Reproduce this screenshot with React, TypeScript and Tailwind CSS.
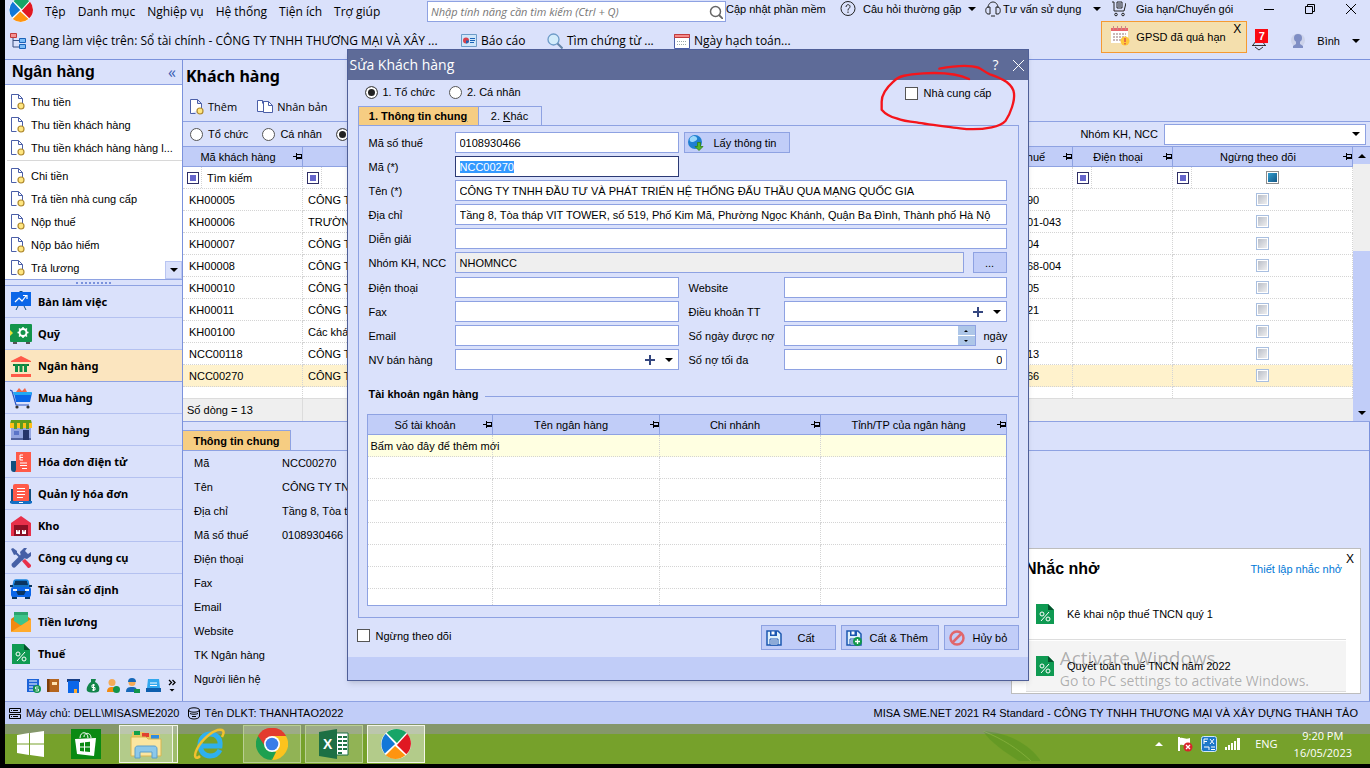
import React, { useEffect, useRef } from 'react';
import clsx from 'clsx';

/* ---------- small shared icons ---------- */

const Caret = ({ up = false, className = '' }: { up?: boolean; className?: string }) => (
  <svg viewBox="0 0 8 4" className={clsx('w-2 h-1 shrink-0', className)}>
    <path d={up ? 'M0 4h8L4 0z' : 'M0 0h8L4 4z'} fill="#000" />
  </svg>
);

const Pin = () => (
  <svg viewBox="0 0 9 7" className="w-[9px] h-[7px] shrink-0" shapeRendering="crispEdges">
    <path d="M0 3h3v1H0zM3 0h1v7H3zM4 1h5v1H4zM4 4h5v2H4zM8 1h1v4H8z" fill="#000" />
  </svg>
);

const NewDoc = () => (
  <svg viewBox="0 0 14 16" className="w-[14px] h-4 shrink-0">
    <path d="M.5 14.500V.5h7l4 4v5M7.500.5v4h4M.5 14.500h5" fill="#fff" stroke="#4b5fa8" />
    <circle cx="10" cy="12" r="3" fill="#ffe680" stroke="#b08a2e" strokeWidth="1.200" />
  </svg>
);

const CopyDoc = () => (
  <svg viewBox="0 0 16 16" className="w-4 h-4 shrink-0">
    <path d="M.5 1.500h5l3 3v8h-8z" fill="#fff" stroke="#4b5fa8" />
    <path d="M6.500 4.500h5l4 4v7h-9z" fill="#fff" stroke="#4b5fa8" transform="translate(0 -2)" />
    <path d="M11.500 2.500v4h4M5.500 1.500v3" fill="none" stroke="#4b5fa8" />
  </svg>
);

const Logo = ({ className }: { className: string }) => (
  <svg viewBox="0 0 32 32" className={className}>
    <circle cx="16" cy="16" r="16" fill="#fff" />
    <path d="M6 4A16 16 0 0 1 27 4L17 15z" fill="#17a567" />
    <path d="M28 5A16 16 0 0 1 27 27L17 17z" fill="#e01822" />
    <path d="M26 28A16 16 0 0 1 5 28L15 18z" fill="#ff9410" />
    <path d="M4 26A16 16 0 0 1 5 5L15 16z" fill="#1378d8" />
  </svg>
);

const TaxIcon = ({ className }: { className: string }) => (
  <svg viewBox="0 0 18 20" className={className}>
    <path d="M0 0h12l6 6v14H0z" fill="#0f9a52" />
    <path d="M12 0l6 6h-6z" fill="#04532c" />
    <circle cx="6" cy="10" r="2" fill="none" stroke="#fff" />
    <circle cx="12" cy="15" r="2" fill="none" stroke="#fff" />
    <path d="M5 17l8-9" stroke="#fff" />
  </svg>
);

const Floppy = ({ plus = false }: { plus?: boolean }) => (
  <svg viewBox="0 0 16 16" className="w-4 h-4 shrink-0">
    <path d="M1 1h11l3 3v11H1z" fill="#dff0fb" stroke="#1b57b0" strokeWidth="1.500" />
    <path d="M4 1h7v5H4z" fill="#1b57b0" />
    <path d="M5.500 1.500h3v3h-3z" fill="#fff" />
    <path d="M4 9h8v6H4z" fill="#fff" stroke="#1b57b0" />
    <path d="M5 11h6M5 13h6" stroke="#1b57b0" />
    {plus && (
      <>
        <circle cx="11.500" cy="11.500" r="4.500" fill="#12984a" />
        <path d="M9 11.500h5M11.500 9v5" stroke="#fff" strokeWidth="1.300" />
      </>
    )}
  </svg>
);

/* ---------- sidebar data ---------- */

const tasksIn = ['Thu tiền', 'Thu tiền khách hàng', 'Thu tiền khách hàng hàng l...'];
const tasksOut = ['Chi tiền', 'Trả tiền nhà cung cấp', 'Nộp thuế', 'Nộp bảo hiểm', 'Trả lương'];

const modules: { label: string; icon: React.ReactNode }[] = [
  {
    label: 'Bàn làm việc',
    icon: (
      <>
        <path d="M10 0h2v2h-2zM8 15l-2 4M14 15l2 4" fill="#12507e" stroke="#12507e" />
        <path d="M1 1h20v14H1z" fill="#0a66e8" />
        <path d="M5 11l4-4 3 3 4-5M13 4.500h4V8" fill="none" stroke="#fff" strokeWidth="1.200" />
      </>
    ),
  },
  {
    label: 'Quỹ',
    icon: (
      <>
        <path d="M3 19h4v2H3zM16 19h4v2h-4z" fill="#555" />
        <rect y="1" width="22" height="18" rx="1" fill="#12944b" />
        <path d="M0 7l3 3-3 3z" fill="#e6e23a" />
        <path d="M13 4v11M7.500 9.500h11M9 5.500l8 8M17 5.500l-8 8" stroke="#fff" strokeWidth="1.500" />
        <circle cx="13" cy="9.500" r="3.500" fill="#12944b" stroke="#fff" strokeWidth="2" />
      </>
    ),
  },
  {
    label: 'Ngân hàng',
    icon: (
      <>
        <path d="M1 6l10-5 10 5v1H1zM1 19h20v3H1z" fill="#ff5a48" />
        <path d="M3 9h16v2H3z" fill="#0b7a3b" />
        <path d="M5 9h3v8H5zM9.500 9h3v8h-3zM14 9h3v8h-3z" fill="#0f8d45" />
      </>
    ),
  },
  {
    label: 'Mua hàng',
    icon: (
      <>
        <path d="M6 5l3-4 3 3 3-3 2 4z" fill="#f0664a" />
        <path d="M4 6h18l-2 9H6z" fill="#0a66e8" />
        <path d="M3 5h19l-1 3H4z" fill="#23a8f2" />
        <path d="M0 3l2 1 4 14h13" fill="none" stroke="#2b55c4" strokeWidth="1.200" />
        <circle cx="7" cy="20" r="1.600" fill="#333" />
        <circle cx="18" cy="20" r="1.600" fill="#333" />
      </>
    ),
  },
  {
    label: 'Bán hàng',
    icon: (
      <>
        <path d="M1 9h20v12H1z" fill="#93a5e0" />
        <path d="M1 19h20v2H1z" fill="#51639f" />
        <path d="M4 12h5v4H4z" fill="#5a74c8" />
        <path d="M13 11h6v10h-6z" fill="#24356b" />
        <path d="M1 1h20l1 4H0z" fill="#5f9a1c" />
        <path d="M0 4h22v5H0z" fill="#ffc01a" />
        <path d="M4 4h3v6H4zM10 4h3v6h-3zM16 4h3v6h-3z" fill="#5f9a1c" />
      </>
    ),
  },
  {
    label: 'Hóa đơn điện tử',
    icon: (
      <>
        <path d="M1 10h6v11H4a3 3 0 0 1-3-3z" fill="#12507e" />
        <path d="M6 1h15v20H5l1-2z" fill="#ff5a48" />
        <path d="M13 4h-3v5h3M10 6.500h3M10 12h7M10 14.500h7M12 17.500h5" fill="none" stroke="#fff" />
      </>
    ),
  },
  {
    label: 'Quản lý hóa đơn',
    icon: (
      <>
        <path d="M1 6h20v13H1z" fill="#12507e" />
        <rect x="3" y="1" width="16" height="18" rx="2" fill="#ff5a48" />
        <path d="M7 5.500h8M7 8.500h8M7 11.500h8M7 14.500h6" stroke="#fff" />
        <path d="M0 18h22v2l-2 1H2l-2-1z" fill="#146fc4" />
        <path d="M9 19h4v1H9z" fill="#fff" />
      </>
    ),
  },
  {
    label: 'Kho',
    icon: (
      <>
        <path d="M1 8l10-7 10 7v13H1z" fill="#e8304a" />
        <path d="M4 10h14v11H4z" fill="#8a1024" />
        <path d="M6 15h4v4H6zM12 15h4v4h-4z" fill="#fff" />
        <path d="M7.500 15h1v1.500h-1zM13.500 15h1v1.500h-1z" fill="#8a1024" />
      </>
    ),
  },
  {
    label: 'Công cụ dụng cụ',
    icon: (
      <>
        <path d="M3 3l10 10" stroke="#4660a6" strokeWidth="2" />
        <path d="M1 2l2-1 4 3v3l-3 1z" fill="#4660a6" />
        <path d="M12 14l3-2 6 6a2.500 2.500 0 0 1-3 3z" fill="#e8304a" />
        <path d="M4 18l9-9" stroke="#4660a6" strokeWidth="5" strokeLinecap="round" />
        <path d="M11 9l-1-4 4-4h3l-2 3 3 3 3-2v4l-4 3-4-1z" fill="#4660a6" />
      </>
    ),
  },
  {
    label: 'Tài sản cố định',
    icon: (
      <>
        <path d="M5 1h12l2 7H3z" fill="#0a3560" />
        <path d="M4 3a2 2 0 0 1 2-2h10a2 2 0 0 1 2 2l1 4H3z" fill="none" stroke="#1684e0" strokeWidth="1.500" />
        <path d="M0 6h3v2H0zM19 6h3v2h-3zM2 17h5v3H2zM15 17h5v3h-5z" fill="#0a3560" />
        <rect x="1" y="8" width="20" height="10" rx="2" fill="#0a66e8" />
        <path d="M3 10h4v2H3zM15 10h4v2h-4z" fill="#e9f4ff" />
        <path d="M6 12h10l-2 4H8z" fill="#0a3560" />
      </>
    ),
  },
  {
    label: 'Tiền lương',
    icon: (
      <>
        <path d="M1 8l10-7 10 7v12H1z" fill="#d97c08" />
        <path d="M4 1h14v13H4z" fill="#3cc48a" />
        <path d="M4 1h14v3H4z" fill="#2aa36e" />
        <path d="M1 8l12 8-12 5z" fill="#f28a10" />
        <path d="M21 8v13H1z" fill="#ffab2e" />
      </>
    ),
  },
];

const MiniIcons = () => (
  <svg viewBox="0 0 134 16" className="w-[134px] h-4" aria-hidden="true">
    <path d="M0 1h12v13H0z" fill="#1b63d8" />
    <path d="M2 3h8M2 6h8M2 9h4M2 12h4" stroke="#fff" strokeWidth="1.200" />
    <circle cx="10" cy="11" r="4" fill="#12944b" />
    <path d="M11.500 9h-3v2h3v2h-3" fill="none" stroke="#fff" strokeWidth=".8" />
    <path d="M20 1h12v13H20z" fill="#b5651d" />
    <path d="M20 1h2.500v13H20z" fill="#7c3c08" />
    <path d="M25 4h5v3h-5z" fill="#ffe3b0" />
    <path d="M40 1h13v3H40z" fill="#173f86" />
    <path d="M41 3h11v12H41z" fill="#0a66e8" />
    <path d="M47 11h3v4h-3z" fill="#ffab2e" />
    <path d="M64 1h5l-1 3c4 2 5 6 4 9-1 2-10 2-12 0-1-3 1-7 4-9z" fill="#12854a" />
    <path d="M68 7h-3v2.500h3V12h-3M66.500 6v7" fill="none" stroke="#fff" />
    <circle cx="85" cy="4.500" r="3.500" fill="#f3ab58" />
    <path d="M80 14c0-4 2-5 5-5s5 1 5 5z" fill="#f28a10" />
    <circle cx="89.500" cy="11.500" r="3.500" fill="#12944b" />
    <circle cx="105" cy="4.500" r="3.500" fill="#f3ab58" />
    <path d="M101 4a4 4 0 0 1 8 0zM99 14c0-4 2-5 6-5s5 1 5 5z" fill="#1668b8" />
    <path d="M107 11h6v4h-6z" fill="#12944b" />
    <path d="M121 1h11l1 9h-13z" fill="#32a8ee" />
    <path d="M119 10h15v4h-15z" fill="#0d5fae" />
    <path d="M123 5h7M123 7.500h7" stroke="#fff" />
  </svg>
);

/* ---------- customers ---------- */

const customers = [
  { code: 'KH00005', name: 'CÔNG TY', tax: '0101243190' },
  { code: 'KH00006', name: 'TRƯỜNG', tax: '0100686601-043' },
  { code: 'KH00007', name: 'CÔNG TY', tax: '0104128504' },
  { code: 'KH00008', name: 'CÔNG TY', tax: '0100109168-004' },
  { code: 'KH00010', name: 'CÔNG TY', tax: '0105987405' },
  { code: 'KH00011', name: 'CÔNG TY', tax: '0107530021' },
  { code: 'KH00100', name: 'Các khách', tax: '' },
  { code: 'NCC00118', name: 'CÔNG TY', tax: '0102516413' },
  { code: 'NCC00270', name: 'CÔNG TY', tax: '0108930466' },
];

const details = [
  ['Mã', 'NCC00270'],
  ['Tên', 'CÔNG TY TNHH'],
  ['Địa chỉ', 'Tầng 8, Tòa tháp'],
  ['Mã số thuế', '0108930466'],
  ['Điện thoại', ''],
  ['Fax', ''],
  ['Email', ''],
  ['Website', ''],
  ['TK Ngân hàng', ''],
  ['Người liên hệ', ''],
];

const FilterMark = () => (
  <span className="flex h-3 w-3 shrink-0 items-center justify-center border border-[#2e2e66] bg-white">
    <span className="h-1.5 w-1.5 bg-[#6666cc]" />
  </span>
);

const HeadCell = ({ children, className = '' }: { children: React.ReactNode; className?: string }) => (
  <th className={clsx('h-5 border-r border-b border-[#8ea2e2] bg-[#c1cdf8] p-0 font-normal', className)}>
    <div className="flex h-[19px] items-center">
      <span className="flex-1 truncate text-center">{children}</span>
      <Pin />
    </div>
  </th>
);

const Radio = ({ name, label, checked = false }: { name: string; label: string; checked?: boolean }) => (
  <label className="flex items-center gap-[5px] whitespace-nowrap">
    <input
      type="radio"
      name={name}
      defaultChecked={checked}
      className="h-[13px] w-[13px] shrink-0 appearance-none rounded-full border border-[#555] bg-white checked:bg-[#222] checked:shadow-[inset_0_0_0_2px_#fff]"
    />
    {label}
  </label>
);

/* ---------- header ---------- */

const Header = () => (
  <header className="shrink-0 font-['Open_Sans','Noto_Sans',sans-serif] text-[11px]">
    <div className="flex h-[23px] items-center overflow-hidden">
      <div className="flex w-[422px] shrink-0 items-center">
        <Logo className="mr-3 ml-1 -mt-1 h-6 w-6 shrink-0" />
        <nav className="flex gap-3 text-xs whitespace-nowrap">
          {['Tệp', 'Danh mục', 'Nghiệp vụ', 'Hệ thống', 'Tiện ích', 'Trợ giúp'].map((m) => (
            <a key={m} href="#">{m}</a>
          ))}
        </nav>
      </div>
      <div className="flex h-[21px] w-[299px] shrink-0 items-center border border-[#8ea2e2] bg-white pr-0.5 pl-[3px]">
        <input
          aria-label="Tìm tính năng"
          placeholder="Nhập tính năng cần tìm kiếm (Ctrl + Q)"
          className="min-w-0 flex-1 italic outline-none placeholder:text-[#777]"
        />
        <svg viewBox="0 0 14 14" className="h-[14px] w-[14px] shrink-0" fill="none" stroke="#666">
          <circle cx="6.500" cy="6.500" r="5" strokeWidth="1.500" />
          <path d="M10 10l4 4" strokeWidth="1.800" />
        </svg>
      </div>
      <div className="flex h-[18px] flex-1 items-center self-start font-['Liberation_Sans',sans-serif] whitespace-nowrap">
        <a href="#" className="w-[114px]">Cập nhật phần mềm</a>
        <svg viewBox="0 0 16 16" className="mr-[7px] h-4 w-4" fill="none" stroke="#222">
          <circle cx="8" cy="7.500" r="7" />
          <path d="M6 6c0-3 4-3 4-.5C10 7.500 8 7 8 9.500M8 10.500V12" />
        </svg>
        <a href="#" className="w-[105px]">Câu hỏi thường gặp</a>
        <Caret className="mr-[9px]" />
        <svg viewBox="0 0 16 16" className="mr-0.5 h-4 w-4" fill="none" stroke="#222">
          <path d="M3 7C3-1 13-1 13 7M5 6v7H3c-3 0-3-7 0-7zM11 6v7h2c3 0 3-7 0-7zM6 15h4" />
        </svg>
        <a href="#" className="w-[90px]">Tư vấn sử dụng</a>
        <Caret className="mr-[11px]" />
        <svg viewBox="0 0 14 16" className="mr-[10px] h-4 w-[14px]" fill="none" stroke="#222">
          <path d="M0 1h2v9h10l2-8M5 1h5v6H5zM6 3h3M6 5h3" />
          <circle cx="4" cy="13.500" r="1.300" />
          <circle cx="11" cy="13.500" r="1.300" />
        </svg>
        <a href="#">Gia hạn/Chuyển gói</a>
        <div className="ml-auto flex items-center gap-[31px] pr-[14px]">
          <button aria-label="Thu nhỏ"><svg viewBox="0 0 10 10" className="h-[10px] w-[10px]"><path d="M0 5.500h10" stroke="#000" /></svg></button>
          <button aria-label="Khôi phục">
            <svg viewBox="0 0 10 10" className="h-[10px] w-[10px]" fill="none" stroke="#000"><path d="M.5 2.500h7v7h-7zM2.500 2.500v-2h7v7h-2" /></svg>
          </button>
          <button aria-label="Đóng">
            <svg viewBox="0 0 10 10" className="h-[10px] w-[10px]" stroke="#000"><path d="M0 0l10 10M10 0L0 10" /></svg>
          </button>
        </div>
      </div>
    </div>
    <div className="flex h-9 items-center text-xs whitespace-nowrap">
      <button className="flex w-[456px] shrink-0 items-center gap-1 pl-[5px]">
        <svg viewBox="0 0 16 16" className="h-4 w-4">
          <path d="M3 4v10h6M3 7.500h6" fill="none" stroke="#3a4f80" />
          <path d="M.5.5h6v4h-6z" fill="#f59191" stroke="#c23b3b" />
          <path d="M9.500 5.500h6v4h-6zM9.500 11.500h6v4h-6z" fill="#7dbdf7" stroke="#1b63b8" />
        </svg>
        Đang làm việc trên: Sổ tài chính - CÔNG TY TNHH THƯƠNG MẠI VÀ XÂY ...
      </button>
      <button className="flex w-[86px] items-center gap-1">
        <svg viewBox="0 0 16 16" className="h-4 w-4">
          <path d="M.5 1.500h15v12H.5z" fill="#cfe6fa" stroke="#6d9bc8" />
          <circle cx="5" cy="7.500" r="3" fill="#d8414c" />
          <path d="M5 7.500h3a3 3 0 0 1-3 3z" fill="#1b63b8" />
          <path d="M9 5.500h5M9 7.500h5M9 9.500h4" stroke="#1b63b8" />
        </svg>
        Báo cáo
      </button>
      <button className="flex w-[127px] items-center gap-1">
        <svg viewBox="0 0 16 16" className="h-4 w-4">
          <circle cx="6.500" cy="6.500" r="5.500" fill="#d3ecfb" stroke="#6d9bc8" strokeWidth="1.300" />
          <path d="M10.500 10.500l5 5" stroke="#6585a8" strokeWidth="2" />
        </svg>
        Tìm chứng từ ...
      </button>
      <button className="flex items-center gap-1">
        <svg viewBox="0 0 16 16" className="h-4 w-4">
          <path d="M.5 1.500h15v14H.5z" fill="#fff" stroke="#4b5fa8" />
          <path d="M.5 1.500h15v3H.5z" fill="#f58a8a" stroke="#c23b3b" />
          <path d="M3 8.500h10M3 11.500h10" stroke="#9aa" strokeDasharray="1 1" />
        </svg>
        Ngày hạch toán...
      </button>
      <div className="ml-auto flex items-center font-['Liberation_Sans',sans-serif] text-[11px]">
        <div className="-mt-2 mr-1 flex h-8 w-[146px] border border-[#f59a32] bg-[#f4dfad] pr-[5px] pl-2">
          <svg viewBox="0 0 20 20" className="mt-1 mr-[6px] h-5 w-5 shrink-0">
            <path d="M1 2h17v15H1z" fill="#fff" />
            <path d="M1 2h17v3H1z" fill="#e8646a" />
            <path d="M3.500 0v4M7.500 0v4M11.500 0v4M15.500 0v4" stroke="#c88" />
            <path d="M3 8h13M3 11h13M3 14h9" stroke="#c9b8b8" strokeWidth="2" strokeDasharray="2 1" />
            <circle cx="15" cy="15" r="4.500" fill="#ffc83a" />
            <path d="M15 12v4M15 17v1.500" stroke="#d8414c" strokeWidth="1.300" />
          </svg>
          <span className="flex-1 self-center">GPSD đã quá hạn</span>
          <button aria-label="Bỏ qua" className="self-start text-xs leading-[14px]">X</button>
        </div>
        <div className="relative mr-[24px] h-5 w-4">
          <svg viewBox="0 0 16 20" className="h-5 w-4" fill="none" stroke="#333">
            <path d="M1 14.500h14M2 14l3-4h6l3 4M4 16l4 3 4-3" />
          </svg>
          <span className="absolute -top-0.5 left-1 flex h-[14px] w-[13px] items-center justify-center bg-[#fa0a12] font-bold text-white">7</span>
        </div>
        <svg viewBox="0 0 14 16" className="mr-3 h-4 w-[14px]">
          <circle cx="7" cy="7.500" r="7" fill="#cdd3ea" />
          <circle cx="7" cy="5" r="4" fill="#7f8ec4" />
          <path d="M5 8h4v3l3 2v2H2v-2l3-2z" fill="#7f8ec4" />
        </svg>
        <span className="mr-3">Bình</span>
        <Caret className="mr-[10px]" />
      </div>
    </div>
  </header>
);

/* ---------- sidebar ---------- */

const Sidebar = () => (
  <aside className="flex w-[178px] shrink-0 flex-col border-r border-[#7b92dc]">
    <div className="flex h-[25px] items-center justify-between border-b border-[#8ea2e2] pr-1.5 pl-[7px]">
      <h2 className="text-base font-bold">Ngân hàng</h2>
      <span className="font-['Open_Sans',sans-serif] text-base text-[#3a5fb5]">«</span>
    </div>
    <div className="relative bg-white pt-[5px]">
      {tasksIn.map((t) => (
        <a key={t} href="#" className="flex h-[23px] items-center gap-1.5 pl-1.5 whitespace-nowrap"><NewDoc />{t}</a>
      ))}
      <hr className="mt-px mb-[3px] ml-0.5 border-[#d8d8d8]" />
      {tasksOut.map((t) => (
        <a key={t} href="#" className="flex h-[23px] items-center gap-1.5 pl-1.5 whitespace-nowrap"><NewDoc />{t}</a>
      ))}
      <button aria-label="Cuộn xuống" className="absolute right-0 bottom-0 flex h-[18px] w-[17px] items-center justify-center border border-[#b9c5f2] bg-[#dae1fb]"><Caret /></button>
    </div>
    <div className="flex h-[7px] items-center justify-center border-y border-[#8ea2e2]">
      <div className="w-[35px] border-t-2 border-dotted border-[#7b92dc]" />
    </div>
    <nav className="font-['Noto_Sans',sans-serif] text-[11px] font-bold">
      {modules.map((m) => (
        <a
          key={m.label}
          href="#"
          className={clsx(
            'flex h-8 items-center gap-1.5 border-b pl-[5px]',
            m.label === 'Ngân hàng' ? 'border-[#8ea2e2] bg-[#fbe5bf]' : 'border-[#b4c1f0]',
          )}
        >
          <svg viewBox="0 0 22 22" className="h-[22px] w-[22px]">{m.icon}</svg>
          {m.label}
        </a>
      ))}
      <a href="#" className="flex h-8 items-center gap-[7px] border-b border-[#b4c1f0] pl-[7px]">
        <TaxIcon className="mr-px h-5 w-[18px]" />
        Thuế
      </a>
    </nav>
    <div className="flex flex-1 items-center justify-end gap-[7px] pr-1.5">
      <MiniIcons />
      <button aria-label="Thêm phân hệ">
        <svg viewBox="0 0 8 14" className="h-[14px] w-2" fill="none" stroke="#000">
          <path d="M1 1l2.500 2.500L1 6M4.500 1L7 3.500 4.500 6" strokeWidth="1.300" />
          <path d="M1.500 10h5L4 12.500z" fill="#000" stroke="none" />
        </svg>
      </button>
    </div>
  </aside>
);

/* ---------- customer list ---------- */

const CustomerTable = () => (
  <div className="flex border-y border-[#8ea2e2] bg-white">
    <div className="min-w-0 flex-1">
      <table className="w-full table-fixed border-separate border-spacing-0">
        <colgroup>
          <col className="w-[120px]" />
          <col />
          <col className="w-[100px]" />
          <col className="w-[100px]" />
          <col className="w-[180px]" />
        </colgroup>
        <thead>
          <tr>
            <HeadCell>Mã khách hàng</HeadCell>
            <HeadCell>Tên khách hàng</HeadCell>
            <HeadCell>Mã số thuế</HeadCell>
            <HeadCell>Điện thoại</HeadCell>
            <HeadCell>Ngừng theo dõi</HeadCell>
          </tr>
        </thead>
        <tbody>
          <tr>
            {['code', 'name', 'tax', 'phone', 'stop'].map((c) => (
              <td key={c} className="h-[22px] border-r border-b border-dotted border-[#d4d4d4] p-0">
                <div className="flex h-[21px] items-center pl-1">
                  <FilterMark />
                  <span className="ml-0.5 h-full border-l border-dotted border-[#d4d4d4]" />
                  {c === 'stop' ? (
                    <span className="flex flex-1 justify-center">
                      <input
                        type="checkbox"
                        aria-label="Lọc ngừng theo dõi"
                        className="h-[13px] w-[13px] appearance-none border border-[#8c8c8c] bg-linear-to-br from-[#35a7d8] to-[#12507e] shadow-[inset_0_0_0_1px_#fff]"
                      />
                    </span>
                  ) : (
                    <input
                      aria-label={`Lọc ${c}`}
                      placeholder={c === 'code' ? 'Tìm kiếm' : ''}
                      className="ml-[5px] min-w-0 flex-1 outline-none placeholder:text-black"
                    />
                  )}
                </div>
              </td>
            ))}
          </tr>
          {customers.map((c) => (
            <tr key={c.code} className={c.code === 'NCC00270' ? 'bg-[#fff2cc]' : 'bg-white'}>
              {[c.code, c.name, c.tax, ''].map((v, i) => (
                <td key={i} className={clsx('h-[22px] overflow-hidden border-r border-b border-dotted border-[#d4d4d4] py-0 whitespace-nowrap', i === 0 ? 'pl-1.5' : 'pl-[5px]')}>
                  {v}
                </td>
              ))}
              <td className="border-r border-b border-dotted border-[#d4d4d4] p-0">
                <div className="flex justify-center">
                  <input
                    type="checkbox"
                    aria-label={`Ngừng theo dõi ${c.code}`}
                    className="h-[13px] w-[13px] appearance-none border border-[#a9bfe0] bg-linear-to-br from-[#b4b9c4] to-[#f4f4f4] shadow-[inset_0_0_0_1px_#fff]"
                  />
                </div>
              </td>
            </tr>
          ))}
          <tr>
            {[0, 1, 2, 3, 4].map((i) => (
              <td key={i} className="h-[11px] border-r border-dotted border-[#d4d4d4] p-0" />
            ))}
          </tr>
        </tbody>
      </table>
      <div className="flex h-[23px] items-center border-t border-[#dcdcdc] bg-[#efefef]">
        <span className="flex h-full w-[120px] items-center border-r border-[#dcdcdc] pl-1">Số dòng = 13</span>
      </div>
    </div>
    <div className="flex w-[17px] flex-col bg-[#efefef]">
      <button aria-label="Lên" className="flex h-[17px] items-center justify-center bg-[#c1cdf8]"><Caret up /></button>
      <div className="h-[87px]" />
      <div className="flex flex-1 items-end justify-center bg-[#c1cdf8] pb-1.5"><Caret /></div>
    </div>
  </div>
);

const CustomerPage = () => (
  <main className="flex min-w-0 flex-1 flex-col">
    <h1 className="flex h-8 items-center pl-[3px] font-['Noto_Sans',sans-serif] text-base font-bold">Khách hàng</h1>
    <div className="flex h-[30px] items-center gap-5 border-b border-[#8ea2e2] pl-[7px] font-['Open_Sans',sans-serif]">
      <button className="flex items-center gap-1"><NewDoc />Thêm</button>
      <button className="flex items-center gap-1"><CopyDoc />Nhân bản</button>
    </div>
    <div className="flex h-6 items-center pr-1 pl-[7px]">
      <div className="flex gap-[14px]">
        <Radio name="kind" label="Tổ chức" />
        <Radio name="kind" label="Cá nhân" />
        <Radio name="kind" label="Cả hai" checked />
      </div>
      <label htmlFor="group" className="mr-1.5 ml-auto">Nhóm KH, NCC</label>
      <div className="relative flex h-[21px] w-[202px] items-center border border-[#8ea2e2] bg-white">
        <select id="group" className="h-full w-full appearance-none" />
        <Caret className="pointer-events-none absolute right-[5px]" />
      </div>
    </div>
    <CustomerTable />
    <section className="flex-1 border-r border-[#7b92dc] pt-2">
      <div className="flex h-[21px] border-b border-[#8ea2e2]">
        <button className="w-[108px] border-t border-r border-[#8ea2e2] bg-[#f6cd82] font-bold">Thông tin chung</button>
      </div>
      <dl className="grid grid-cols-[88px_1fr] pl-[11px]">
        {details.map(([k, v]) => (
          <React.Fragment key={k}>
            <dt className="flex h-6 items-center">{k}</dt>
            <dd className="flex h-6 items-center whitespace-nowrap">{v}</dd>
          </React.Fragment>
        ))}
      </dl>
    </section>
  </main>
);

/* ---------- edit dialog ---------- */

const inputBox = 'h-[21px] min-w-0 border border-[#8ea2e2] bg-white px-1 outline-none';

const Field = ({ id, label, children, labelWidth = 'w-[86px]' }: { id: string; label: string; children: React.ReactNode; labelWidth?: string }) => (
  <div className="flex h-[21px] items-center">
    <label htmlFor={id} className={clsx('shrink-0 whitespace-nowrap', labelWidth)}>{label}</label>
    {children}
  </div>
);

const Combo = ({ id }: { id: string }) => (
  <div className="flex h-[21px] min-w-0 flex-1 items-center border border-[#8ea2e2] bg-white pr-[5px]">
    <select id={id} className="h-full min-w-0 flex-1 appearance-none" />
    <button aria-label="Thêm mới" className="mr-2.5">
      <svg viewBox="0 0 10 10" className="h-[10px] w-[10px]"><path d="M0 5h10M5 0v10" stroke="#34467f" strokeWidth="2" /></svg>
    </button>
    <Caret />
  </div>
);

const actionButton = 'flex h-[25px] items-center border border-[#8ea2e2] bg-[#c1cdf8] pl-1';

const bankColumns = ['Số tài khoản', 'Tên ngân hàng', 'Chi nhánh', 'Tỉnh/TP của ngân hàng'];

const EditDialog = () => {
  const codeRef = useRef<HTMLInputElement>(null);

  useEffect(() => {
    codeRef.current?.focus();
    codeRef.current?.select();
  }, []);

  return (
    <div role="dialog" aria-label="Sửa Khách hàng" className="relative w-[682px] border border-[#4f5f98] bg-[#dae1fb] shadow-md">
      <div className="flex h-[30px] items-center bg-[#5e6b98] pr-1 pl-0.5 font-['Open_Sans','Noto_Sans',sans-serif] text-white">
        <h2 className="flex-1 text-sm">Sửa Khách hàng</h2>
        <button aria-label="Trợ giúp" className="mr-3.5 text-sm">?</button>
        <button aria-label="Đóng">
          <svg viewBox="0 0 11 11" className="h-[11px] w-[11px]" stroke="#fff"><path d="M0 0l11 11M11 0L0 11" /></svg>
        </button>
      </div>

      <div className="flex h-[26px] items-center pr-9 pl-[17px]">
        <div className="flex gap-[14px] pb-0.5">
          <Radio name="type" label="1. Tổ chức" checked />
          <Radio name="type" label="2. Cá nhân" />
        </div>
        <label className="ml-auto flex items-center gap-1.5">
          <input type="checkbox" className="h-[13px] w-[13px] appearance-none border border-[#555] bg-white" />
          Nhà cung cấp
        </label>
      </div>

      <div className="pr-[9px] pl-[10px]">
        <div className="flex h-[19px]">
          <button className="w-[120px] border-t border-l border-[#8ea2e2] bg-[#f6cd82] font-bold">1. Thông tin chun<u>g</u></button>
          <button className="w-[64px] border border-b-0 border-[#8ea2e2]">2. <u>K</u>hác</button>
        </div>
        <div className="border border-[#8ea2e2] pt-1.5 pb-[11px]">
          <div className="flex flex-col gap-[3px] pr-[11px] pl-[10px]">
            <Field id="tax" label="Mã số thuế">
              <input id="tax" defaultValue="0108930466" className={clsx(inputBox, 'w-[224px]')} />
              <button className="ml-[5px] flex h-[21px] w-[106px] items-center border border-[#8ea2e2] bg-[#c1cdf8] pl-[3px]">
                <svg viewBox="0 0 16 16" className="h-4 w-4">
                  <circle cx="7" cy="7" r="7" fill="#1f7fd0" />
                  <path d="M2 3c3-3 6-2 7 0S6 7 4 7 1 5 2 3z" fill="#9ad8fa" />
                  <path d="M11 15.500L7 11.500h2.500V7.500h3v4H15z" fill="#54b52a" stroke="#2f8212" strokeWidth=".8" />
                </svg>
                <span className="ml-[10px]">Lấy thông tin</span>
              </button>
            </Field>
            <Field id="code" label="Mã (*)">
              <input
                id="code"
                ref={codeRef}
                defaultValue="NCC00270"
                className="h-[21px] w-[224px] border border-[#2c3a75] bg-white px-1 outline-none selection:bg-[#3399ff] selection:text-white"
              />
            </Field>
            <Field id="name" label="Tên (*)">
              <input id="name" defaultValue="CÔNG TY TNHH ĐẦU TƯ VÀ PHÁT TRIỂN HỆ THỐNG ĐẤU THẦU QUA MẠNG QUỐC GIA" className={clsx(inputBox, 'flex-1')} />
            </Field>
            <Field id="address" label="Địa chỉ">
              <input id="address" defaultValue="Tầng 8, Tòa tháp VIT TOWER, số 519, Phố Kim Mã, Phường Ngọc Khánh, Quận Ba Đình, Thành phố Hà Nộ" className={clsx(inputBox, 'flex-1')} />
            </Field>
            <Field id="note" label="Diễn giải">
              <input id="note" className={clsx(inputBox, 'flex-1')} />
            </Field>
            <Field id="groups" label="Nhóm KH, NCC">
              <input id="groups" readOnly defaultValue="NHOMNCC" className="h-[21px] min-w-0 flex-1 border border-[#8ea2e2] bg-[#efefef] px-1 outline-none" />
              <button className="ml-[9px] h-[21px] w-[34px] border border-[#8ea2e2] bg-[#c1cdf8]">...</button>
            </Field>
            <div className="mt-px grid grid-cols-[310px_1fr] gap-x-[10px] gap-y-[3px]">
              <Field id="phone" label="Điện thoại"><input id="phone" className={clsx(inputBox, 'flex-1')} /></Field>
              <Field id="web" label="Website" labelWidth="w-[95px]"><input id="web" className={clsx(inputBox, 'flex-1')} /></Field>
              <Field id="fax" label="Fax"><input id="fax" className={clsx(inputBox, 'flex-1')} /></Field>
              <Field id="terms" label="Điều khoản TT" labelWidth="w-[95px]"><Combo id="terms" /></Field>
              <Field id="email" label="Email"><input id="email" className={clsx(inputBox, 'flex-1')} /></Field>
              <Field id="days" label="Số ngày được nợ" labelWidth="w-[95px]">
                <div className="flex h-[21px] w-[192px] shrink-0 border border-[#8ea2e2] bg-white">
                  <input id="days" className="min-w-0 flex-1 px-1 outline-none" />
                  <div className="flex w-[17px] flex-col gap-px">
                    <button aria-label="Tăng" className="flex flex-1 items-center justify-center bg-[#adc6e8]"><svg viewBox="0 0 4 2" className="h-0.5 w-1"><path d="M0 2h4L2 0z" /></svg></button>
                    <button aria-label="Giảm" className="flex flex-1 items-center justify-center bg-[#adc6e8]"><svg viewBox="0 0 4 2" className="h-0.5 w-1"><path d="M0 0h4L2 2z" /></svg></button>
                  </div>
                </div>
                <span className="pl-2">ngày</span>
              </Field>
              <Field id="staff" label="NV bán hàng"><Combo id="staff" /></Field>
              <Field id="debt" label="Số nợ tối đa" labelWidth="w-[95px]"><input id="debt" defaultValue="0" className={clsx(inputBox, 'flex-1 text-right')} /></Field>
            </div>
          </div>

          <div className="mt-4 flex h-4 items-center gap-1.5 pl-[10px]">
            <h3 className="font-bold">Tài khoản ngân hàng</h3>
            <span className="mt-1 h-px flex-1 bg-[#8ea2e2]" />
          </div>

          <div className="mt-3 mr-[11px] ml-2 border border-[#8ea2e2] bg-white">
            <table className="w-full table-fixed border-separate border-spacing-0">
              <colgroup>
                <col className="w-[125px]" />
                <col className="w-[167px]" />
                <col className="w-[161px]" />
                <col />
              </colgroup>
              <thead>
                <tr>{bankColumns.map((c) => <HeadCell key={c} className="last:border-r-0">{c}</HeadCell>)}</tr>
              </thead>
              <tbody>
                {[0, 1, 2, 3, 4, 5, 6].map((r) => (
                  <tr key={r} className={r === 0 ? 'bg-[#ffffe1]' : 'bg-white'}>
                    {bankColumns.map((c, i) => (
                      <td key={c} className="h-[22px] border-r border-b border-dotted border-[#d4d4d4] py-0 pr-0 pl-[3px] whitespace-nowrap last:border-r-0">
                        {r === 0 && i === 0 && 'Bấm vào đây để thêm mới'}
                      </td>
                    ))}
                  </tr>
                ))}
                <tr>
                  {bankColumns.map((c) => <td key={c} className="h-4 border-r border-dotted border-[#d4d4d4] p-0 last:border-r-0" />)}
                </tr>
              </tbody>
            </table>
          </div>
        </div>
      </div>

      <div className="flex h-[39px] items-center gap-[5px] px-[9px]">
        <label className="mr-auto flex items-center gap-1.5 pb-1">
          <input type="checkbox" className="h-[13px] w-[13px] appearance-none border border-[#555] bg-white" />
          Ngừng theo dõi
        </label>
        <button className={clsx(actionButton, 'w-[75px] gap-4')}><Floppy />Cất</button>
        <button className={clsx(actionButton, 'w-[98px] gap-2')}><Floppy plus />Cất &amp; Thêm</button>
        <button className={clsx(actionButton, 'w-[75px] gap-2')}>
          <svg viewBox="0 0 16 16" className="h-4 w-4" fill="none" stroke="#e0666c">
            <circle cx="8" cy="8" r="6.500" strokeWidth="2.500" />
            <path d="M3.500 12.500l9-9" strokeWidth="2.500" />
          </svg>
          Hủy bỏ
        </button>
      </div>
      <div className="h-[23px] bg-[#c1cdf8]" />

      {/* Hand drawn ring around the supplier tick box */}
      <svg viewBox="0 180 420 222" className="pointer-events-none absolute top-[11px] right-2 h-[74px] w-[140px]" fill="none" stroke="#f5151b" strokeWidth="7" strokeLinecap="round" strokeLinejoin="round">
        <path d="M267 234C235 219 180 214 130 217S55 225 40 242C22 258 5 282 5 302v24c12 14 25 21 45 26 20 8 40 10 60 12 30 6 100 14 130 18s70 2 95-3 33-10 42-20c14-20 28-60 25-82-1-14-12-26-22-34-12-8-35-18-50-23-15-6-20-13-35-20-30-10-75-5-117 3" />
      </svg>
    </div>
  );
};

/* ---------- reminders ---------- */

const Reminders = () => (
  <section className="absolute right-[9px] bottom-[74px] h-[146px] w-[350px] border border-[#bdbdbd] bg-white">
    <div className="flex h-[40px] items-center pr-1.5 pl-[13px]">
      <h2 className="flex-1 text-base font-bold">Nhắc nhở</h2>
      <a href="#" className="text-[#0078d7]">Thiết lập nhắc nhở</a>
      <button aria-label="Đóng nhắc nhở" className="mt-0.5 ml-1 self-start text-xs">X</button>
    </div>
    <a href="#" className="mx-[14px] flex h-[51px] items-center gap-[13px] border-b border-[#ddd] pl-[10px]">
      <TaxIcon className="h-5 w-[18px]" />Kê khai nộp thuế TNCN quý 1
    </a>
    <a href="#" className="mx-[14px] mt-px flex h-[51px] items-center gap-[13px] border-b border-[#ddd] bg-[#f4f4f4] pl-[10px]">
      <TaxIcon className="h-5 w-[18px]" />Quyết toán thuế TNCN năm 2022
    </a>
  </section>
);

/* ---------- status bar and taskbar ---------- */

const StatusBar = () => (
  <footer className="flex h-[23px] shrink-0 items-center border-t border-[#8ea2e2] bg-[#c1cdf8] pr-3 pl-1">
    <svg viewBox="0 0 12 13" className="mr-[5px] h-[13px] w-3" fill="none" stroke="#000">
      <path d="M.5 1.500h11v4H.5zM.5 7.500h11v4H.5zM2 3.500h1M4 3.500h5M2 9.500h1M4 9.500h5" />
    </svg>
    <span>Máy chủ: DELL\MISASME2020</span>
    <svg viewBox="0 0 12 13" className="mr-1 ml-[9px] h-[13px] w-3" fill="none" stroke="#000">
      <ellipse cx="6" cy="3" rx="5.500" ry="2.200" />
      <path d="M.5 3v6c0 4 11 4 11 0V3M2 6.500c2 1 6 1 8 0M4 9.500h4" />
    </svg>
    <span>Tên DLKT: THANHTAO2022</span>
    <span className="ml-auto">MISA SME.NET 2021 R4 Standard - CÔNG TY TNHH THƯƠNG MẠI VÀ XÂY DỰNG THÀNH TẢO</span>
  </footer>
);

const taskButton = 'flex h-[38px] items-center justify-center border';

const Taskbar = () => (
  <div className="flex h-10 shrink-0 items-center bg-linear-to-b from-[#85976b] from-25% to-[#76a12b] to-25% text-white">
    <button aria-label="Bắt đầu" className="ml-3 w-[54px]">
      <svg viewBox="0 0 27 26" className="h-[26px] w-[27px]" fill="#fff"><path d="M0 4l12-2v10.500H0zM13 2l14-2v12.500H13zM0 13.500h12V24L0 22zM13 13.500h14V26l-14-2z" /></svg>
    </button>
    <button aria-label="Store" className="w-[48px]">
      <svg viewBox="0 0 30 30" className="h-[30px] w-[30px]">
        <path d="M0 0h30v30H0z" fill="#0a8a12" />
        <path d="M9 9c0-7 8-7 8 0M13 8c0-5 7-5 7 1" fill="none" stroke="#fff" />
        <path d="M4 10l21-1-2 18-17-2z" fill="#fff" />
        <path d="M9 14l4-.5v4H9zM14 13.300l5-.5v4.700h-5zM9 18.500h4v4l-4-.5zM14 18.500h5V23l-5-.5z" fill="#0a8a12" />
      </svg>
    </button>
    <div className="mr-[13px] flex">
      <button aria-label="Explorer" className={clsx(taskButton, 'w-[54px] border-[#f2f5e8] bg-white/45')}>
        <svg viewBox="0 0 33 30" className="h-[30px] w-[33px]">
          <path d="M2 3h12l2 2h14v22H2z" fill="#e8c661" />
          <path d="M4 2h6v4H4z" fill="#12a04a" />
          <path d="M12 4h7v4h-7z" fill="#e04030" />
          <path d="M21 6h8v4h-8z" fill="#2f8be0" />
          <path d="M1 8h15l2 2h13v17H1z" fill="#fbe6a0" stroke="#d9b650" />
          <path d="M5 29v-9c0-2 1-3 3-3h16c2 0 3 1 3 3v9h-5v-6H10v6z" fill="#8cc8ea" stroke="#5c9fca" />
        </svg>
      </button>
      <span className="w-[5px] border border-l-0 border-[#f2f5e8] bg-white/30" />
    </div>
    <button aria-label="Internet Explorer" className="w-[52px]">
      <svg viewBox="0 0 34 32" className="ml-0.5 h-8 w-[34px]" fill="none">
        <path d="M27 22c-2 4-6 6-10 6-6 0-10-5-10-11S11 6 17 6c7 0 11 5 10 12H9" stroke="#2fb0ee" strokeWidth="5" />
        <path d="M7 28c-4 4-7 1-3-7C9 11 22 0 29 2c3 1 1 5 0 7" stroke="#f2c12e" strokeWidth="2.500" />
      </svg>
    </button>
    <div className="flex gap-1">
      <button aria-label="Chrome" className={clsx(taskButton, 'w-[58px] border-[#b9cf93] bg-white/20')}>
        <svg viewBox="0 0 32 32" className="h-8 w-8">
          <path d="M16 16L2.100 8A16 16 0 0 1 29.900 8z" fill="#e33b2e" />
          <path d="M16 16L29.900 8A16 16 0 0 1 16 32z" fill="#fcc31e" />
          <path d="M16 16v16A16 16 0 0 1 2.100 8z" fill="#1ea050" />
          <path d="M16 8h13.900L23 20zM16 24l-1 8 8-12z" fill="#fcc31e" />
          <path d="M2.100 8l7 12 3-8zM9 20l7 12 4-8z" fill="#1ea050" />
          <path d="M16 8h13.900a16 16 0 0 0-27.800 0L9 18z" fill="#e33b2e" />
          <circle cx="16" cy="16" r="8" fill="#fff" />
          <circle cx="16" cy="16" r="6.300" fill="#3a7de8" />
        </svg>
      </button>
      <button aria-label="Excel" className={clsx(taskButton, 'w-[58px] border-[#b9cf93] bg-white/20')}>
        <svg viewBox="0 0 30 30" className="h-[30px] w-[30px]">
          <path d="M15 4h14v22H15z" fill="#fff" stroke="#1d7044" />
          <path d="M19 8h4M24 8h4M19 12h4M24 12h4M19 16h4M24 16h4M19 20h4M24 20h4M19 24h4" stroke="#1d7044" strokeWidth="2" />
          <path d="M0 3l18-3v30L0 27z" fill="#1d7044" />
          <text x="4" y="20" fontSize="14" fontWeight="bold" fill="#fff">X</text>
        </svg>
      </button>
      <button aria-label="MISA" className={clsx(taskButton, 'w-[58px] border-[#f2f5e8] bg-white/45')}>
        <Logo className="h-[30px] w-[30px]" />
      </button>
    </div>
    <div className="ml-auto flex items-center">
      <svg viewBox="0 0 70 30" className="mr-[104px] h-[30px] w-[70px] self-end opacity-30">
        <path d="M2 0c25 2 45 12 58 30H38C25 22 10 12 2 0z" fill="#3f8a16" />
        <path d="M2 0c20 8 35 18 48 30" stroke="#9cc95a" fill="none" />
      </svg>
      <button aria-label="Biểu tượng ẩn" className="mr-3.5"><svg viewBox="0 0 8 4" className="h-1 w-2"><path d="M0 4h8L4 0z" fill="#fff" /></svg></button>
      <svg viewBox="0 0 16 16" className="mr-2 h-4 w-4">
        <path d="M1 1h2v14H1zM3 2c4-1 5 2 10 0v7c-5 2-6-1-10 0z" fill="#fff" />
        <circle cx="11" cy="11" r="4.500" fill="#d8242c" />
        <path d="M9 9l4 4M13 9l-4 4" stroke="#fff" strokeWidth="1.300" />
      </svg>
      <svg viewBox="0 0 16 16" className="mr-2 h-4 w-4">
        <rect x=".5" y=".5" width="15" height="15" rx="2" fill="#1d78c8" stroke="#cfe6fa" />
        <path d="M3 3h4M3 5.500h3M3 3v5M9 3l4 5M13 3L9 8M3 11h5v3M10 11h4M10 13.500h4" stroke="#fff" fill="none" />
      </svg>
      <svg viewBox="0 0 16 12" className="mr-[14px] h-3 w-4" fill="#fff"><path d="M0 9h2v3H0zM3 7h2v5H3zM6 5h2v7H6zM9 3h2v9H9zM12 0h3v12h-3z" /></svg>
      <span className="mr-4 font-['Open_Sans',sans-serif] text-[11px]">ENG</span>
      <div className="mr-[18px] text-center font-['Open_Sans',sans-serif] text-[11px] leading-[17px]">
        <div>9:20 PM</div>
        <div>16/05/2023</div>
      </div>
    </div>
  </div>
);

export default function App() {
  return (
    <div className="relative flex min-h-screen flex-col bg-black pb-1 pl-[5px] font-['Liberation_Sans',sans-serif] text-[11px] leading-4 text-black">
      <div className="flex flex-1 flex-col bg-[#dae1fb]">
        <Header />
        <div className="flex flex-1 border-t border-[#7b92dc]">
          <Sidebar />
          <CustomerPage />
        </div>
        <StatusBar />
      </div>
      <Taskbar />
      <Reminders />
      <div className="pointer-events-none absolute right-[61px] bottom-[76px] font-['Open_Sans',sans-serif] text-black/30">
        <div className="text-[19px] leading-6">Activate Windows</div>
        <div className="text-sm leading-[22px]">Go to PC settings to activate Windows.</div>
      </div>
      <div className="absolute inset-x-0 top-[49px] flex justify-center pl-[5px]">
        <EditDialog />
      </div>
    </div>
  );
}
